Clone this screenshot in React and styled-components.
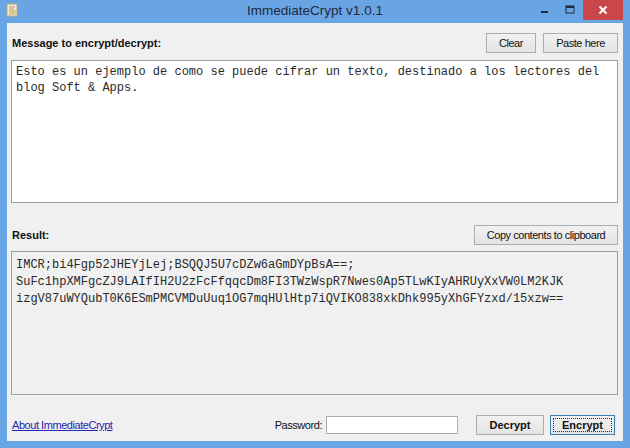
import React from "react";
import styled, { createGlobalStyle } from "styled-components";

const Global = createGlobalStyle`
  html, body {
    margin: 0;
    padding: 0;
    background: #69a5e4;
  }
  * {
    box-sizing: border-box;
  }
`;

const Window = styled.div`
  width: 630px;
  height: 448px;
  display: flex;
  flex-direction: column;
  background: #69a5e4;
  font-family: "Liberation Sans", Arial, sans-serif;
`;

const TitleBar = styled.div`
  position: relative;
  height: 23px;
  flex: none;
  display: flex;
  align-items: center;
  justify-content: center;
`;

const Title = styled.div`
  font-family: "Liberation Sans", Arial, sans-serif;
  font-size: 13.5px;
  color: #1e2a3a;
  margin-top: -2px;
`;

const AppIcon = styled.svg`
  position: absolute;
  left: 5px;
  top: 3px;
`;

const Controls = styled.div`
  position: absolute;
  right: 7px;
  top: 0;
  display: flex;
  align-items: flex-start;
  height: 20px;
`;

const CtrlBtn = styled.div`
  width: ${(p) => p.w}px;
  height: 20px;
  display: flex;
  align-items: center;
  justify-content: center;
  background: ${(p) => (p.close ? "#c9474b" : "transparent")};
`;

const Client = styled.div`
  flex: 1;
  margin: 0 7px 7px 7px;
  background: #f0f0f0;
  padding: 10px 5px 0 4px;
  display: flex;
  flex-direction: column;
`;

const Row = styled.div`
  display: flex;
  align-items: center;
  height: ${(p) => p.h || 20}px;
  margin-top: ${(p) => p.mt || 0}px;
  flex: none;
`;

const Label = styled.div`
  font-family: "Liberation Sans", Arial, sans-serif;
  font-weight: bold;
  font-size: 11px;
  color: #111;
  padding-left: 1px;
  flex: 1;
`;

const Button = styled.button`
  height: ${(p) => p.h || 20}px;
  width: ${(p) => p.w}px;
  margin-left: ${(p) => p.ml || 0}px;
  padding: 0;
  border: 1px solid ${(p) => (p.focused ? "#3c7fb1" : "#adadad")};
  background: linear-gradient(#f2f2f2, #e3e3e3);
  font-family: "Liberation Sans", Arial, sans-serif;
  font-size: 11px;
  letter-spacing: ${(p) => (p.bold ? "0" : "-0.45px")};
  font-weight: ${(p) => (p.bold ? 700 : 400)};
  color: #111;
  white-space: nowrap;
  position: relative;
  cursor: default;
  &::after {
    content: "";
    display: ${(p) => (p.focused ? "block" : "none")};
    position: absolute;
    inset: 2px;
    border: 1px dotted #333;
  }
`;

const TextBox = styled.div`
  flex: none;
  height: ${(p) => p.h}px;
  margin-top: ${(p) => p.mt}px;
  background: ${(p) => (p.readOnly ? "#f0f0f0" : "#ffffff")};
  border: 1px solid #9a9ea6;
  padding: ${(p) => (p.readOnly ? "5px" : "3px")} 4px;
  font-family: "Liberation Mono", "Courier New", monospace;
  font-size: 12px;
  line-height: ${(p) => p.lh}px;
  color: #2a2a2a;
  white-space: pre;
  overflow: hidden;
`;

const Footer = styled.div`
  display: flex;
  align-items: center;
  height: 20px;
  margin-top: 20px;
  padding-left: 1px;
  padding-right: 3px;
`;

const Link = styled.a`
  font-family: "Liberation Sans", Arial, sans-serif;
  font-size: 11px;
  letter-spacing: -0.45px;
  color: #2525b0;
  text-decoration: underline;
  flex: 1;
`;

const FieldLabel = styled.span`
  font-family: "Liberation Sans", Arial, sans-serif;
  font-size: 11px;
  letter-spacing: -0.45px;
  color: #111;
  margin-right: 4px;
`;

const Input = styled.input`
  width: 132px;
  height: 18px;
  border: 1px solid #abadb3;
  background: #fff;
  margin: 0 18px 0 0;
  padding: 0 3px;
`;

export default function App() {
  return (
    <>
      <Global />
      <Window>
        <TitleBar>
          <AppIcon width="14" height="14" viewBox="0 0 14 14">
            <rect x="2" y="1" width="10" height="12" rx="1" fill="#f3ead0" stroke="#b8a97a" />
            <rect x="4" y="7" width="7" height="5" fill="#d9c98c" />
            <path d="M4 4h6M4 6h5" stroke="#9a8a60" strokeWidth="0.8" />
          </AppIcon>
          <Title>ImmediateCrypt v1.0.1</Title>
          <Controls>
            <CtrlBtn w={26}>
              <svg width="10" height="10" viewBox="0 0 10 10">
                <rect x="2" y="6" width="7" height="2" fill="#1d2a3c" />
              </svg>
            </CtrlBtn>
            <CtrlBtn w={26}>
              <svg width="10" height="10" viewBox="0 0 10 10">
                <rect x="1" y="1" width="8" height="7" fill="none" stroke="#1d2a3c" strokeWidth="1" />
                <rect x="1" y="1" width="8" height="2" fill="#1d2a3c" />
              </svg>
            </CtrlBtn>
            <CtrlBtn w={40} close>
              <svg width="10" height="10" viewBox="0 0 10 10">
                <path d="M1.5 1.5l7 7M8.5 1.5l-7 7" stroke="#fff" strokeWidth="2" />
              </svg>
            </CtrlBtn>
          </Controls>
        </TitleBar>
        <Client>
          <Row>
            <Label>Message to encrypt/decrypt:</Label>
            <Button w={50}>Clear</Button>
            <Button w={75} ml={7}>Paste here</Button>
          </Row>
          <TextBox h={143} mt={7} lh={16}>
            {"Esto es un ejemplo de como se puede cifrar un texto, destinado a los lectores del\nblog Soft & Apps."}
          </TextBox>
          <Row mt={22}>
            <Label>Result:</Label>
            <Button w={144}>Copy contents to clipboard</Button>
          </Row>
          <TextBox h={144} mt={6} lh={17} readOnly>
            {"IMCR;bi4Fgp52JHEYjLej;BSQQJ5U7cDZw6aGmDYpBsA==;\nSuFc1hpXMFgcZJ9LAIfIH2U2zFcFfqqcDm8FI3TWzWspR7Nwes0Ap5TLwKIyAHRUyXxVW0LM2KJK\nizgV87uWYQubT0K6ESmPMCVMDuUuq1OG7mqHUlHtp7iQVIKO838xkDhk995yXhGFYzxd/15xzw=="}
          </TextBox>
          <Footer>
            <Link href="#">About ImmediateCrypt</Link>
            <FieldLabel>Password:</FieldLabel>
            <Input type="password" />
            <Button w={68} bold>Decrypt</Button>
            <Button w={65} ml={6} bold focused>Encrypt</Button>
          </Footer>
        </Client>
      </Window>
    </>
  );
}
